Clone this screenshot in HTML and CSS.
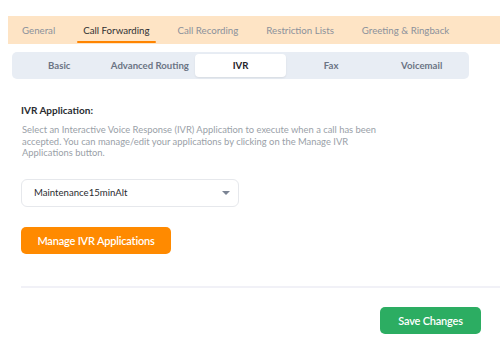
FILE: index.html
```html
<!DOCTYPE html>
<html>
<head>
	<title>Call Forwarding - IVR</title>
	<link rel="stylesheet" href="styles.css">
</head>
<body>
	<div id="page">
		<div class="tabs">
			<a class="tab">General</a>
			<a class="tab active">Call Forwarding</a>
			<a class="tab">Call Recording</a>
			<a class="tab">Restriction Lists</a>
			<a class="tab">Greeting &amp; Ringback</a>
		</div>
		<div class="subtabs">
			<a class="subtab">Basic</a>
			<a class="subtab">Advanced Routing</a>
			<a class="subtab active">IVR</a>
			<a class="subtab">Fax</a>
			<a class="subtab">Voicemail</a>
		</div>
		<div class="content">
			<div class="label">IVR Application:</div>
			<p class="help">Select an Interactive Voice Response (IVR) Application to execute when a call has been accepted. You can manage/edit your applications by clicking on the Manage IVR Applications button.</p>
			<div class="select">
				<span>Maintenance15minAlt</span>
				<svg width="8" height="4" viewBox="0 0 8 4"><path d="M0 0h8L4 4z" fill="#7b8494"/></svg>
			</div>
			<button class="btn btn-orange">Manage IVR Applications</button>
			<div class="footer">
				<button class="btn btn-green">Save Changes</button>
			</div>
		</div>
	</div>
</body>
</html>
```

FILE: styles.css
```css
body {
	margin:0;
	background:#fff;
	font-family:Lato, "Open Sans", sans-serif;
}
#page {
	padding-top:16px;
}
.tabs {
	margin-left:8px;
	height:28px;
	background:#fee4c5;
	display:flex;
	gap:16px;
	padding-left:8px;
}
.tab {
	position:relative;
	padding:0 6px;
	line-height:28px;
	font-size:9.7px;
	white-space:nowrap;
	color:#8b919b;
}
.tab.active {
	color:#2f3033;
}
.tab.active:after {
	content:"";
	position:absolute;
	left:0;
	right:0;
	bottom:1px;
	height:2px;
	border-radius:1px;
	background:#ff8400;
}

.subtabs {
	margin:8px 0 0 12px;
	width:453px;
	padding:2px;
	display:grid;
	grid-template-columns:repeat(5, 1fr);
	background:#e8edf4;
	border-radius:5px;
}
.subtab {
	height:23px;
	line-height:23px;
	text-align:center;
	font-size:9.6px;
	font-weight:bold;
	white-space:nowrap;
	color:#6b7484;
	border-radius:4px;
}
.subtab.active {
	background:#fff;
	color:#1f2329;
	box-shadow:0 1px 2px rgba(0,0,0,.08);
}

.content {
	padding:25px 0 0 21px;
}
.label {
	font-size:10px;
	font-weight:bold;
	color:#2a2c30;
}
.help {
	width:370px;
	margin:8px 0 0 1px;
	font-size:9.4px;
	line-height:11.5px;
	color:#9a9fa8;
}
.select {
	margin-top:20px;
	height:26px;
	border:1px solid #e6e8ec;
	border-radius:6px;
	display:flex;
	align-items:center;
	justify-content:space-between;
	padding:0 8px 0 12px;
	font-size:9.6px;
	color:#2a2c30;
	width:196px;
}

.btn {
	border:0;
	font-family:Lato, sans-serif;
	font-size:11px;
	font-weight:600;
	color:#fff;
	border-radius:5px;
	letter-spacing:-.2px;
}
.btn-orange {
	margin-top:20px;
	width:150px;
	height:27px;
	background:#ff8a00;
}
.footer {
	margin-top:32px;
	border-top:2px solid #f1f1f7;
	padding:19px 19px 0 0;
	display:flex;
	justify-content:flex-end;
}
.btn-green {
	width:101px;
	height:27px;
	background:#2cad62;
}
```
